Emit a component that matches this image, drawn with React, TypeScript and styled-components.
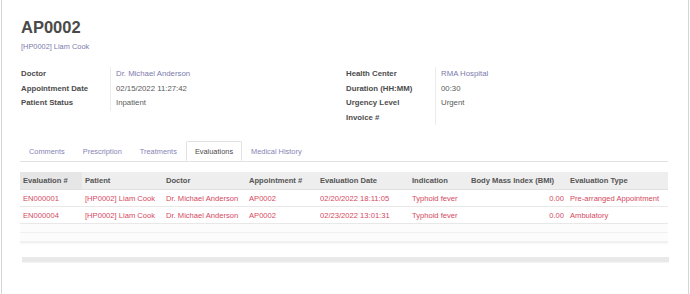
import styled, { createGlobalStyle } from "styled-components";

const GlobalStyle = createGlobalStyle`
  html, body {
    margin: 0;
    padding: 0;
    background: #ffffff;
  }
  body {
    font-family: "Liberation Sans", Arial, sans-serif;
    color: #4c4c4c;
  }
`;

type Field = { label: string; value?: string; link?: boolean };

const leftFields: Field[] = [
  { label: "Doctor", value: "Dr. Michael Anderson", link: true },
  { label: "Appointment Date", value: "02/15/2022 11:27:42" },
  { label: "Patient Status", value: "Inpatient" },
];

const rightFields: Field[] = [
  { label: "Health Center", value: "RMA Hospital", link: true },
  { label: "Duration (HH:MM)", value: "00:30" },
  { label: "Urgency Level", value: "Urgent" },
  { label: "Invoice #" },
];

const tabs = ["Comments", "Prescription", "Treatments", "Evaluations", "Medical History"];

const columns = [
  { title: "Evaluation #", width: 62 },
  { title: "Patient", width: 81 },
  { title: "Doctor", width: 83 },
  { title: "Appointment #", width: 71 },
  { title: "Evaluation Date", width: 92 },
  { title: "Indication", width: 59 },
  { title: "Body Mass Index (BMI)", width: 99 },
  { title: "Evaluation Type", width: 101 },
];

const rows = [
  ["EN000001", "[HP0002] Liam Cook", "Dr. Michael Anderson", "AP0002", "02/20/2022 18:11:05", "Typhoid fever", "0.00", "Pre-arranged Appointment"],
  ["EN000004", "[HP0002] Liam Cook", "Dr. Michael Anderson", "AP0002", "02/23/2022 13:01:31", "Typhoid fever", "0.00", "Ambulatory"],
];

export default function App() {
  return (
    <>
      <GlobalStyle />
      <Page>
        <Sheet>
          <Title>AP0002</Title>
          <SubLink>[HP0002] Liam Cook</SubLink>
          <Groups>
            <Group>
              {leftFields.map((f) => (
                <FieldRow key={f.label}>
                  <Label>{f.label}</Label>
                  <Value $link={f.link}>{f.value}</Value>
                </FieldRow>
              ))}
            </Group>
            <Group>
              {rightFields.map((f) => (
                <FieldRow key={f.label}>
                  <Label>{f.label}</Label>
                  <Value $link={f.link}>{f.value}</Value>
                </FieldRow>
              ))}
            </Group>
          </Groups>

          <TabBar>
            {tabs.map((t) => (
              <Tab key={t} $active={t === "Evaluations"}>
                {t}
              </Tab>
            ))}
          </TabBar>

          <Table>
            <colgroup>
              {columns.map((c) => (
                <col key={c.title} style={{ width: c.width }} />
              ))}
            </colgroup>
            <thead>
              <tr>
                {columns.map((c, i) => (
                  <Th key={c.title} $sorted={i === 0}>
                    {c.title}
                  </Th>
                ))}
              </tr>
            </thead>
            <tbody>
              {rows.map((r) => (
                <tr key={r[0]}>
                  {r.map((cell, i) => (
                    <Td key={i} $right={i === 6}>
                      {cell}
                    </Td>
                  ))}
                </tr>
              ))}
              {[0, 1].map((n) => (
                <EmptyRow key={n}>
                  <td colSpan={8} />
                </EmptyRow>
              ))}
            </tbody>
          </Table>
          <TableFoot />
          <Pager />
        </Sheet>
      </Page>
    </>
  );
}

const Page = styled.div`
  width: 690px;
  height: 294px;
  overflow: hidden;
  background: #ffffff;
`;

const Sheet = styled.div`
  width: 688px;
  height: 300px;
  margin-left: 1px;
  border-left: 1px solid #d6d6d6;
  border-right: 1px solid #d6d6d6;
  box-sizing: border-box;
  padding: 16px 18px 0 18px;
  background: #ffffff;
`;

const Title = styled.h1`
  margin: 0;
  padding-left: 1px;
  font-size: 16.5px;
  line-height: 22px;
  font-weight: bold;
  color: #4a4a4a;
`;

const SubLink = styled.div`
  margin-top: 4px;
  padding-left: 1px;
  font-size: 7.4px;
  line-height: 10px;
  color: #7c7bad;
`;

const Groups = styled.div`
  display: grid;
  grid-template-columns: 1fr 1fr;
  margin-top: 15px;
`;

const Group = styled.div`
  display: flex;
  flex-direction: column;
`;

const FieldRow = styled.div`
  display: grid;
  grid-template-columns: 90px 1fr;
  height: 14.6px;
  align-items: stretch;
`;

const Label = styled.div`
  font-size: 7.8px;
  font-weight: bold;
  color: #4c4c4c;
  line-height: 14.6px;
  padding-left: 1px;
`;

const Value = styled.div<{ $link?: boolean }>`
  font-size: 7.8px;
  line-height: 14.6px;
  color: ${({ $link }) => ($link ? "#7c7bad" : "#5a5a5a")};
  border-left: 1px solid #ececec;
  padding-left: 5px;
`;

const TabBar = styled.div`
  display: flex;
  margin-top: 16px;
  margin-right: 2px;
  border-bottom: 1px solid #e2e2e2;
  height: 20px;
`;

const Tab = styled.div<{ $active?: boolean }>`
  font-size: 7.4px;
  line-height: 19px;
  padding: 0 8px;
  color: ${({ $active }) => ($active ? "#4c4c4c" : "#8584b5")};
  border: 1px solid ${({ $active }) => ($active ? "#e2e2e2" : "transparent")};
  border-bottom-color: ${({ $active }) => ($active ? "#ffffff" : "transparent")};
  border-radius: 2px 2px 0 0;
  background: #ffffff;
  height: 20px;
  box-sizing: border-box;
`;

const Table = styled.table`
  margin-top: 10px;
  width: 648px;
  border-collapse: collapse;
  table-layout: fixed;
  font-size: 7.6px;
`;

const Th = styled.th<{ $sorted?: boolean }>`
  text-align: left;
  font-weight: bold;
  color: #555555;
  background: ${({ $sorted }) => ($sorted ? "#e6e6e6" : "#eeeeee")};
  height: 17px;
  padding: 0 3px;
  white-space: nowrap;
  overflow: hidden;
  border-bottom: 1px solid #e0e0e0;
`;

const Td = styled.td<{ $right?: boolean }>`
  color: #d5485e;
  text-align: ${({ $right }) => ($right ? "right" : "left")};
  height: 16px;
  padding: 0 3px;
  white-space: nowrap;
  overflow: hidden;
  border-bottom: 1px solid #e8e8e8;
`;

const EmptyRow = styled.tr`
  td {
    height: 8px;
    padding: 0;
    background: #fcfcfc;
    border-bottom: 1px solid #f1f1f1;
  }
`;

const TableFoot = styled.div`
  width: 648px;
  height: 1px;
  background: #f0f0f0;
  box-shadow: 0 1px 2px rgba(0, 0, 0, 0.05);
`;

const Pager = styled.div`
  margin-top: 14px;
  margin-left: 2px;
  width: 647px;
  height: 5px;
  background: #e9e9e9;
  box-shadow: 0 1px 1px rgba(0, 0, 0, 0.04);
`;
